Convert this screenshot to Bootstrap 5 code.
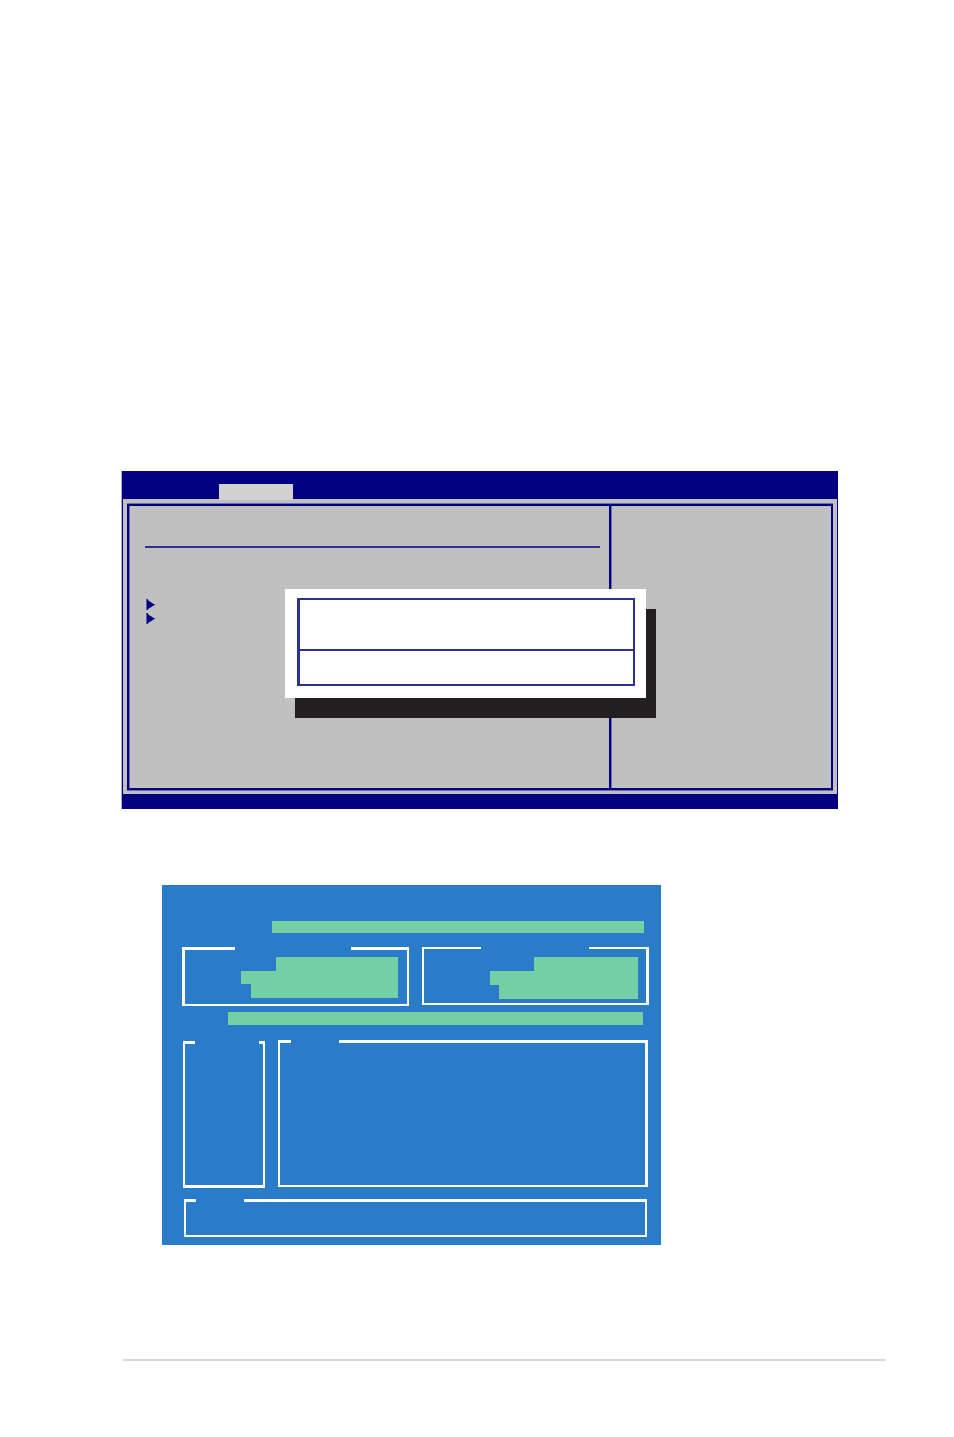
<!DOCTYPE html>
<html lang="en">
<head>
<meta charset="utf-8">
<meta name="viewport" content="width=device-width, initial-scale=1">
<title>BIOS setup</title>
<link rel="stylesheet" href="https://cdn.jsdelivr.net/npm/bootstrap@5.3.0/dist/css/bootstrap.min.css">
<style>
  :root { --navy: #000080; --ink: #2e3192; --silver: #c0c0c0; --haze: #6c6cb0; --sky: #2a7bc8; --mint: #75cfa4; }
  body { font-family: "Liberation Sans", sans-serif; background: #fff; }
  .page { padding: 471px 68px 76px 122px; }

  /* Setup screen */
  .setup { margin-right: 48px; background: var(--silver); border: solid var(--navy); border-width: 0 1px; box-shadow: -1px 0 #a8a8d8; }
  .setup-head { height: 28px; padding-left: 96px; background: var(--navy); }
  .setup-tab { width: 74px; height: 16px; margin-bottom: -1px; background: #d2d2d2; }
  .setup-frame { margin: 5px 4px 4px; min-height: 286px; border: 2px solid var(--navy); box-shadow: 0 -1px var(--haze), 0 1px var(--haze), inset 1px 0 var(--haze); }
  .setup-main { padding: 40px 9px 16px 16px; }
  .setup-rule { height: 2px; margin: 0 0 51px; border: 0; opacity: 1; background: var(--ink); }
  .setup-items { padding-left: 1px; gap: 3px; }
  .setup-help { width: 222px; border-left: 2px solid var(--navy); box-shadow: inset 1px 0 var(--haze); }
  .setup-foot { height: 15px; background: var(--navy); }

  /* Dialog laid over the setup screen */
  .prompt { left: 162px; top: 118px; width: 361px; padding: 9px 11px 12px 12px; background: #fff; box-shadow: 10px 20px #231f20; }
  .prompt-frame { border: 2px solid var(--ink); border-left-width: 3px; }
  .prompt-text { height: 51px; border-bottom: 2px solid var(--ink); }
  .prompt-actions { height: 33px; }

  /* Flash utility */
  .flash { max-width: 499px; margin: 76px 0 0 40px; padding: 36px 12px 8px 20px; background: var(--sky); }
  .strip { background: var(--mint); }
  .strip-file { height: 12px; margin: 0 5px 14px 90px; }
  .strip-path { height: 13px; margin: 6px 6px 15px 46px; }
  .group { min-width: 0; border: 2px solid #fff; border-top-width: 3px; }
  .group > legend { float: none; height: 3px; margin: 0 0 0 10px; padding: 0; font-size: 0; line-height: 0; }
  .pair { gap: 13px; }
  .group-now { height: 59px; border-left-width: 3px; padding: 7px 9px 0 0; }
  .group-now > legend { width: 116px; margin-left: 50px; }
  .group-new { height: 58px; border-top-width: 2px; border-right-width: 3px; padding: 8px 8px 0 0; }
  .group-new > legend { width: 108px; height: 2px; margin-left: 57px; }
  .field { height: 14px; margin-left: auto; }
  .field-mid { height: 13px; }
  .group-drive { width: 82px; height: 147px; margin: 1px 0 0 1px; border-bottom-width: 3px; }
  .group-drive > legend { width: 64px; }
  .group-files { height: 147px; margin-right: 1px; border-right-width: 3px; }
  .group-files > legend { width: 48px; margin-left: 11px; }
  .group-note { height: 38px; margin: 11px 2px 0; }
  .group-note > legend { width: 48px; }

  .page-rule { height: 2px; margin: 114px 0 0 1px; border: 0; opacity: 1; background: #d8d8d8; }
</style>
</head>
<body>
<main class="page">
  <section class="setup position-relative">
    <header class="setup-head d-flex align-items-end">
      <div class="setup-tab position-relative"></div>
    </header>
    <div class="setup-frame d-flex">
      <div class="setup-main flex-grow-1">
        <hr class="setup-rule">
        <ul class="setup-items list-unstyled d-flex flex-column mb-0">
          <li class="d-flex"><svg width="10" height="11" viewBox="0 0 10 11" fill="#000080" aria-hidden="true"><path d="M.5 0H1.5L3 2L5.5 3.5L7.5 5L9.5 5.6L7.5 6.5L5.5 8L3 9.3L1.5 11H.5Z"/></svg></li>
          <li class="d-flex"><svg width="10" height="11" viewBox="0 0 10 11" fill="#000080" aria-hidden="true"><path d="M.5 0H1.5L3 2L5.5 3.5L7.5 5L9.5 5.6L7.5 6.5L5.5 8L3 9.3L1.5 11H.5Z"/></svg></li>
        </ul>
      </div>
      <aside class="setup-help flex-shrink-0"></aside>
    </div>
    <footer class="setup-foot"></footer>
    <div class="prompt position-absolute">
      <div class="prompt-frame">
        <div class="prompt-text"></div>
        <div class="prompt-actions"></div>
      </div>
    </div>
  </section>

  <section class="flash">
    <div class="strip strip-file"></div>
    <div class="pair d-flex align-items-start">
      <fieldset class="group group-now flex-fill w-50">
        <legend></legend>
        <div class="strip field" style="width:122px"></div>
        <div class="strip field field-mid" style="width:157px"></div>
        <div class="strip field" style="width:147px"></div>
      </fieldset>
      <fieldset class="group group-new flex-fill w-50">
        <legend></legend>
        <div class="strip field" style="width:104px"></div>
        <div class="strip field" style="width:148px"></div>
        <div class="strip field" style="width:139px"></div>
      </fieldset>
    </div>
    <div class="strip strip-path"></div>
    <div class="pair d-flex align-items-start">
      <fieldset class="group group-drive flex-shrink-0"><legend></legend></fieldset>
      <fieldset class="group group-files flex-grow-1"><legend></legend></fieldset>
    </div>
    <fieldset class="group group-note"><legend></legend></fieldset>
  </section>

  <hr class="page-rule">
</main>
<script src="https://cdn.jsdelivr.net/npm/bootstrap@5.3.0/dist/js/bootstrap.bundle.min.js"></script>
</body>
</html>
